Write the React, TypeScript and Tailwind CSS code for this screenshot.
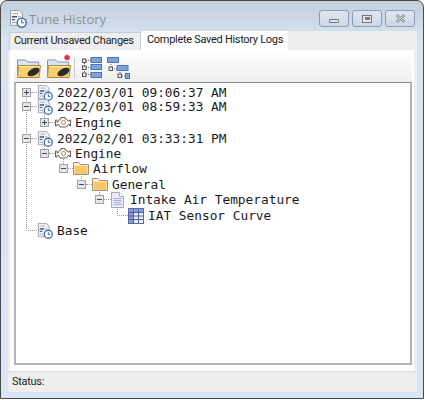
import React from "react";

const LogIcon = ({ size = 16 }: { size?: number }) => (
  <svg width={size} height={size} viewBox="0 0 18 18" className="shrink-0">
    <path d="M1.500 .5h9l3 3v12h-12z" fill="#eef0f4" stroke="#9a9fac" />
    <path d="M3 6h5v1.500H3zM3 9h3v1.200H3z" fill="#46557f" />
    <path d="M4 3.500h5M9 6.500h2.500M3 12.500h4" stroke="#a6adc2" />
    <circle cx="12.700" cy="12.700" r="4.500" fill="#fff" stroke="#3c6fb0" strokeWidth="1.500" />
    <path d="M12.700 10v2.900h2.200" fill="none" stroke="#2f5c99" strokeWidth="1" />
  </svg>
);

const EngineIcon = () => (
  <svg width="16" height="13" viewBox="0 0 16 13" className="shrink-0">
    <path d="M4.500 3H6V1.500h4V3h1.500L13 5h1.500V4H15.500v6H14.500V8.500H13L11.500 11H5L3.500 8.500H2V10H.5V4H2v2h1z" fill="#fbfbfb" stroke="#666" />
    <circle cx="8.500" cy="6.500" r="2" fill="#fff" stroke="#c98a2b" />
  </svg>
);

const FolderIcon = () => (
  <svg width="16" height="15" viewBox="0 0 16 15" className="shrink-0">
    <path d="M.5 13.500V1.500h5.500l1.500 2h8v10z" fill="#fdf1cf" stroke="#9d9584" />
    <path d="M1.500 5h13v8h-13z" fill="#fcc667" />
    <path d="M1.500 4.500h13" stroke="#fbe7b5" />
  </svg>
);

const DocIcon = () => (
  <svg width="13" height="16" viewBox="0 0 13 16" className="shrink-0">
    <path d="M.5.5h8l4 4v11H.5z" fill="#e8ebf7" stroke="#a9acb8" />
    <path d="M8.500.5v4h4" fill="#fff" stroke="#a9acb8" />
    <path d="M2.500 6.500h8M2.500 8.500h8M2.500 10.500h8M2.500 12.500h8" stroke="#a4aedd" />
  </svg>
);

const TableIcon = () => (
  <svg width="16" height="16" viewBox="0 0 16 16" className="shrink-0">
    <rect x=".5" y=".5" width="15" height="15" fill="#eef0f8" stroke="#5a6aa8" />
    <path d="M1 1h14v3H1zM1 4h4v11H1z" fill="#8c9ad2" />
    <path d="M.5 4.500h15M.5 8h15M.5 11.500h15M5.500 1v14M10.500 1v14" stroke="#4f5fa3" />
  </svg>
);

const OpenFolder = ({ alert }: { alert?: boolean }) => (
  <svg width="24" height="24" viewBox="0 0 24 24" className="shrink-0">
    <path d="M.5 21V6h8l2 2h11v13z" fill="#d7e6f4" stroke="#8c97a5" />
    <path d="M.5 23.500l1-12h22l-1.500 12z" fill="#fbcf6a" stroke="#a88a3f" />
    <path d="M2 12.500h20" stroke="#fdeaae" />
    <ellipse cx="16.500" cy="18" rx="6.500" ry="3.500" transform="rotate(-28 16.500 18)" fill="#2b2b2b" />
    {alert && <circle cx="20" cy="3.500" r="2.600" fill="#ee2b2b" stroke="#f57" strokeDasharray="1 1" />}
  </svg>
);

const Expander = ({ plus }: { plus?: boolean }) => (
  <span className="relative z-10 flex h-[9px] w-[9px] shrink-0 items-center justify-center border border-[#a0a0a0] bg-[#e6e6e6]">
    <span className="h-px w-[5px] bg-[#3b4a7c]" />
    {plus && <span className="absolute h-[5px] w-px bg-[#3b4a7c]" />}
  </span>
);

type Row = {
  pad: string;
  height: string;
  exp?: "plus" | "minus";
  dash: string;
  icon: React.ReactNode;
  text: string;
  gap: string;
};

const rows: Row[] = [
  { pad: "pl-[6px]", height: "h-[14px]", exp: "plus", dash: "w-[6px]", icon: <LogIcon />, text: "2022/03/01 09:06:37 AM", gap: "ml-[4px]" },
  { pad: "pl-[6px]", height: "h-[16px]", exp: "minus", dash: "w-[6px]", icon: <LogIcon />, text: "2022/03/01 08:59:33 AM", gap: "ml-[4px]" },
  { pad: "pl-[24px]", height: "h-[16px]", exp: "plus", dash: "w-[6px]", icon: <EngineIcon />, text: "Engine", gap: "ml-[4px]" },
  { pad: "pl-[6px]", height: "h-[15px]", exp: "minus", dash: "w-[6px]", icon: <LogIcon />, text: "2022/02/01 03:33:31 PM", gap: "ml-[4px]" },
  { pad: "pl-[24px]", height: "h-[15px]", exp: "minus", dash: "w-[6px]", icon: <EngineIcon />, text: "Engine", gap: "ml-[4px]" },
  { pad: "pl-[43px]", height: "h-[16px]", exp: "minus", dash: "w-[5px]", icon: <FolderIcon />, text: "Airflow", gap: "ml-[4px]" },
  { pad: "pl-[61px]", height: "h-[15px]", exp: "minus", dash: "w-[6px]", icon: <FolderIcon />, text: "General", gap: "ml-[4px]" },
  { pad: "pl-[79px]", height: "h-[16px]", exp: "minus", dash: "w-[7px]", icon: <DocIcon />, text: "Intake Air Temperature", gap: "ml-[6px]" },
  { pad: "pl-[112px]", height: "h-[15px]", dash: "w-0", icon: <TableIcon />, text: "IAT Sensor Curve", gap: "ml-[4px]" },
  { pad: "pl-[21px]", height: "h-[15px]", dash: "w-0", icon: <LogIcon />, text: "Base", gap: "ml-[4px]" },
];

const Guides = () => (
  <svg className="absolute left-0 top-0" width="200" height="160" fill="none" stroke="#999" strokeDasharray="1 1">
    <path d="M10.500 9V147.500H21" />
    <path d="M28.500 23V39M28.500 55V70" />
    <path d="M47.500 70V85" />
    <path d="M65.500 85V101" />
    <path d="M83.500 101V116" />
    <path d="M101.500 116V132.500H112" />
  </svg>
);

const Chrome = ({ children }: { children: React.ReactNode }) => (
  <div className="flex h-[17px] w-[30px] items-center justify-center rounded-[3px] border border-[#8c9bb0] bg-[linear-gradient(180deg,#dde7f1,#cdd9e6)]">
    {children}
  </div>
);

export default function App() {
  return (
    <div className="h-[400px] w-[425px] bg-white font-['Roboto',sans-serif]">
      <div className="flex h-[399px] w-[424px] flex-col overflow-hidden rounded-t-[7px] border border-[#4a4a4a] bg-[linear-gradient(180deg,#c3d0dc_0%,#d6e3f1_10%,#d9e6f5_100%)] pr-[6px] pb-[6px] pl-[7px]">
        <div className="flex h-[30px] shrink-0 items-start justify-between pt-[9px]">
          <div className="flex items-center gap-[2px] pl-[1px]">
            <LogIcon size={18} />
            <span className="font-['Open_Sans',sans-serif] text-[13px] leading-[18px] text-[#8a9299]">Tune History</span>
          </div>
          <div className="mr-[2px] flex gap-[3px]">
            <Chrome><span className="mt-[4px] h-[4px] w-[10px] rounded-[1px] border border-[#6f7680] bg-[#e8e8e8]" /></Chrome>
            <Chrome><span className="h-[8px] w-[10px] border border-[#6f7680] bg-[#e8e8e8] p-[1.500px]"><span className="block h-full w-full bg-[#6f7680]" /></span></Chrome>
            <Chrome>
              <svg width="11" height="9" viewBox="0 0 11 9"><path d="M1.500 1l8 7M9.500 1l-8 7" stroke="#7c8590" strokeWidth="2.500" /><path d="M1.500 1l8 7M9.500 1l-8 7" stroke="#eee" strokeWidth="1" /></svg>
            </Chrome>
          </div>
        </div>
        <div className="flex h-[19px] shrink-0 items-end">
          <div className="h-[18px] w-px bg-[#d6e3f1]" />
          <div className="flex h-[18px] w-[132px] items-center border-x border-t border-[#c4ccd6] bg-[#eeeeee] pl-[4px] text-[11px] tracking-[-0.3px] whitespace-nowrap text-[#222]">Current Unsaved Changes</div>
          <div className="flex h-[19px] w-[147px] items-center bg-white pl-[6px] text-[11px] tracking-[-0.3px] whitespace-nowrap text-[#222]">Complete Saved History Logs</div>
          <div className="h-[19px] flex-1 bg-[#eeeeee]" />
        </div>
        <div className="flex min-h-0 flex-1 flex-col bg-white">
          <div className="flex-1 border-r-[3px] border-l-2 border-[#eeeeee] pr-[2px] pl-[4px]">
            <div className="flex h-[32px] items-end bg-[linear-gradient(180deg,#ffffff,#efefef)] pb-[4px] pl-[3px]">
              <OpenFolder />
              <span className="ml-[6px]"><OpenFolder alert /></span>
              <span className="mr-[6px] ml-[3px] h-[20px] w-px bg-[#c9c9c9]" />
              <svg width="22" height="21" viewBox="0 0 22 21" fill="none"><path d="M3.500 4v14M5 3.500h5M5 10.500h5M5 17.500h5" stroke="#666" strokeDasharray="1 1" /><rect x="1.500" y="2" width="3.500" height="3.500" fill="#eee" stroke="#555" /><rect x="1.500" y="9" width="3.500" height="3.500" fill="#eee" stroke="#555" /><rect x="1.500" y="16" width="3.500" height="3.500" fill="#eee" stroke="#555" /><rect x="10" y=".5" width="10.500" height="5" fill="#7fa2de" stroke="#4d75b5" /><rect x="10" y="7.500" width="10.500" height="5" fill="#7fa2de" stroke="#4d75b5" /><rect x="10" y="15.500" width="10.500" height="5" fill="#7fa2de" stroke="#4d75b5" /></svg>
              <svg width="24" height="23" viewBox="0 0 24 23" fill="none" className="-mb-[2px] ml-[4px]"><path d="M4 5v7h6M13 13v6h5" stroke="#666" strokeDasharray="1 1" /><rect x=".5" y=".5" width="11" height="5" fill="#7fa2de" stroke="#4d75b5" /><rect x="10" y="8.500" width="11" height="5" fill="#7fa2de" stroke="#4d75b5" /><rect x="18.500" y="16.500" width="4" height="5" fill="#7fa2de" stroke="#4d75b5" /><rect x="2" y="10" width="3.500" height="3.500" fill="#eee" stroke="#555" /><rect x="11" y="17" width="3.500" height="3.500" fill="#eee" stroke="#555" /></svg>
            </div>
            <div className="relative h-[283px] overflow-hidden border-2 border-t border-[#b4b4b8] border-t-[#8d8d90] bg-white pt-[2px] font-['DejaVu_Sans_Mono',monospace] text-[12.800px] text-[#1a1a1a]">
              <Guides />
              {rows.map((r, i) => (
                <div key={i} className={`relative ${r.height} whitespace-nowrap`}>
                  <div className={`flex h-[15px] items-center ${r.pad}`}>
                    {r.exp && <Expander plus={r.exp === "plus"} />}
                    {r.exp && <span className={`${r.dash} border-t border-dotted border-[#999]`} />}
                    {r.icon}
                    <span className={r.gap}>{r.text}</span>
                  </div>
                </div>
              ))}
            </div>
            <div className="h-[6px]" />
          </div>
          <div className="flex h-[21px] shrink-0 items-center border-t border-[#dcdcdc] bg-[#eeeeee] pl-[4px] text-[11px] tracking-[-0.3px] text-[#222]">Status:</div>
        </div>
      </div>
    </div>
  );
}
